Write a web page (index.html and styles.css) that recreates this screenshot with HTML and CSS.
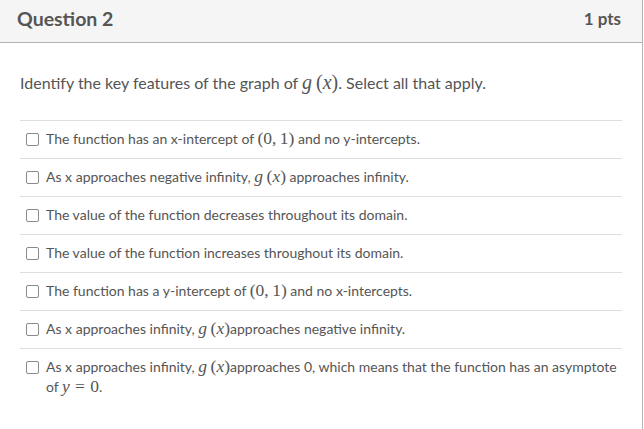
FILE: index.html
```html
<!DOCTYPE html>
<html>
<head>
<meta charset="utf-8">
<link rel="stylesheet" href="styles.css">
</head>
<body>
<div class="question">
  <div class="q-header">
    <span class="q-title">Question 2</span>
    <span class="q-points">1 pts</span>
  </div>
  <div class="q-body">
    <p class="q-text">Identify the key features of the graph of <span class="m"><i>g</i>&#8201;(<i>x</i>)</span>. Select all that apply.</p>
    <ul class="answers">
      <li class="answer"><span class="cb"></span><span class="a-text">The function has an x-intercept of <span class="m">(0,&#8201;1)</span> and no y-intercepts.</span></li>
      <li class="answer"><span class="cb"></span><span class="a-text">As x approaches negative infinity, <span class="m"><i>g</i>&#8201;(<i>x</i>)</span> approaches infinity.</span></li>
      <li class="answer"><span class="cb"></span><span class="a-text">The value of the function decreases throughout its domain.</span></li>
      <li class="answer"><span class="cb"></span><span class="a-text">The value of the function increases throughout its domain.</span></li>
      <li class="answer"><span class="cb"></span><span class="a-text">The function has a y-intercept of <span class="m">(0,&#8201;1)</span> and no x-intercepts.</span></li>
      <li class="answer"><span class="cb"></span><span class="a-text">As x approaches infinity, <span class="m"><i>g</i>&#8201;(<i>x</i>)</span>approaches negative infinity.</span></li>
      <li class="answer"><span class="cb"></span><span class="a-text">As x approaches infinity, <span class="m"><i>g</i>&#8201;(<i>x</i>)</span>approaches 0, which means that the function has an asymptote of <span class="m"><i>y</i><span class="eq">=</span>0</span>.</span></li>
    </ul>
  </div>
</div>
</body>
</html>
```
FILE: styles.css
```css
html, body {
  margin: 0;
  padding: 0;
  background: #ffffff;
}
body {
  font-family: Lato, "Open Sans", sans-serif;
  color: #555;
}
.question {
  width: 642px;
  border-right: 1px solid #b4b4b4;
  border-bottom: 1px solid #b4b4b4;
  background: #fff;
}
.q-header {
  height: 43px;
  box-sizing: border-box;
  background: #f5f5f5;
  border-bottom: 1px solid #b4b4b4;
  display: flex;
  justify-content: space-between;
  align-items: center;
  padding: 0 21px 6px 17px;
  font-weight: bold;
  color: #555;
}
.q-title {
  font-size: 19.5px;
}
.q-points {
  font-size: 17px;
}
.q-body {
  padding: 28px 20px 31px 20px;
}
.q-text {
  margin: 0 0 25px 0;
  font-size: 16px;
  line-height: 24px;
  color: #555;
}
.m {
  font-family: "Liberation Serif", "DejaVu Serif", serif;
  font-size: 1.25em;
  line-height: 1;
  white-space: nowrap;
}
.m i {
  font-style: italic;
}
.eq {
  margin: 0 0.3em;
}
.answers {
  list-style: none;
  margin: 0;
  padding: 0;
}
.answer {
  border-top: 1px solid #dedede;
  display: flex;
  align-items: flex-start;
  padding: 8px 0 9px 6px;
  font-size: 14px;
  line-height: 20px;
  color: #555;
}
.cb {
  flex: none;
  width: 11px;
  height: 11px;
  border: 1px solid #8a8a8a;
  border-radius: 2px;
  margin: 4px 7px 0 0;
  background: #fff;
}
.a-text {
  flex: 1;
}
```
